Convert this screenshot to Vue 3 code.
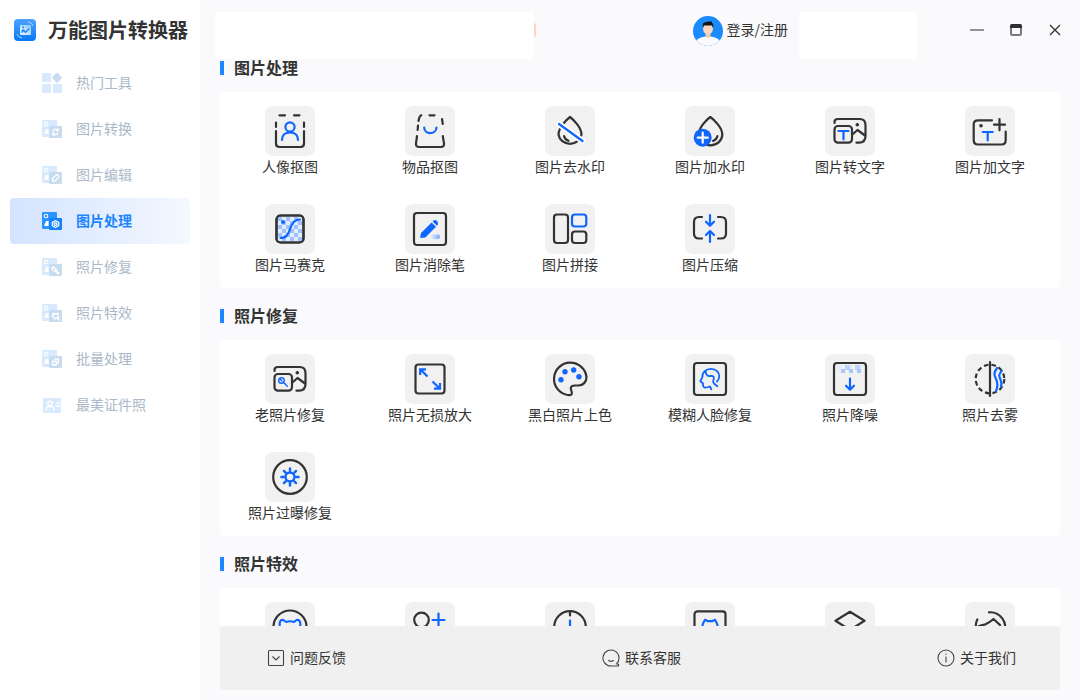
<script setup>
import { ref } from 'vue'

const active = ref('图片处理')

const picture = `<rect x="1" y="2" width="15" height="17" rx="1" fill="var(--base)"/>
<circle cx="5" cy="6" r="1.8" fill="none" stroke="#fff" stroke-width="1.1"/>
<path d="M3 16L5.2 11H7.6V16Z" fill="#fff"/>
<rect x="8" y="8" width="13" height="12" rx="1" fill="var(--badge)"/>`
const glyph = (d) =>
  `${picture}<path d="${d}" fill="none" stroke="#fff" stroke-width="1.3" stroke-linecap="round" stroke-linejoin="round"/>`

const menu = [
  {
    label: '热门工具',
    icon: `<path d="M1 1H10V10H1ZM1 12H10V21H1ZM12 12H21V21H12Z" fill="var(--base)"/><path d="M16 0.5L21.2 5.7L16 10.9L10.8 5.7Z" fill="var(--badge)"/>`
  },
  { label: '图片转换', icon: glyph('M12 13.2A2.8 2.8 0 0 1 17 12.4M17 15A2.8 2.8 0 0 1 12 15.6M17.2 11V12.8H15.6M11.8 17V15.2H13.4') },
  { label: '图片编辑', icon: glyph('M11.5 14.5L14.7 11.4A1.6 1.6 0 0 1 17.4 13.6L14 17H11.5Z') },
  { label: '图片处理', icon: glyph('M14.5 10.7L17.7 12.4V15.8L14.5 17.5L11.3 15.8V12.4ZM13.2 14.1A1.3 1.3 0 1 0 15.8 14.1A1.3 1.3 0 1 0 13.2 14.1') },
  { label: '照片修复', icon: glyph('M15 12.6A2 2 0 1 1 12.8 10.8L13.6 12.4ZM14.6 14L18 17.2M14 14.8L17 17.8') },
  { label: '照片特效', icon: glyph('M12 11.3L14.5 12L17 11.3V14L17.5 15.3L15.2 15.8L13.6 17L13 15.3L11.3 14.6L12.2 13.4ZM16 16L18 18') },
  { label: '批量处理', icon: glyph('M11.5 13.2H15.2V17H11.5ZM13.6 11.2H17.4V15H15.6') },
  {
    label: '最美证件照',
    icon: `<rect x="2" y="4" width="18" height="15" rx="1" fill="var(--base)"/><g fill="none" stroke="#fff" stroke-width="1.5" stroke-linecap="round"><circle cx="9" cy="9.5" r="2.2"/><path d="M5 16C5.5 13 7 12.3 9 12.3S12.5 13 13 16M16 9H18.5M15 12H18.5" /></g>`
  }
]

const BLUE = '#0f66ff'
const blue = (d) => `<path stroke="${BLUE}" d="${d}"/>`
const stackedPhoto = `<path d="M9.5 17V16Q9.5 13 13 13H34.5Q40.5 13 40.5 19V30Q40.5 36.5 34 36.7H31.5M28 28L32.5 24L40 29.5"/>
<rect x="9.5" y="20" width="17.5" height="16.7" rx="3.5"/><circle cx="32.3" cy="18.7" r="1.8" fill="#333" stroke="none"/>`
const frame = '<rect x="9" y="9" width="32" height="32" rx="3"/>'

function checks(x0, y0, cols, rows, size, color) {
  let d = ''
  for (let r = 0; r < rows; r++) {
    for (let c = r % 2; c < cols; c += 2) {
      d += `M${x0 + c * size} ${y0 + r * size}h${size}v${size}h${-size}z`
    }
  }
  return `<path stroke="none" fill="${color}" d="${d}"/>`
}

const rays = Array.from({ length: 8 }, (_, i) =>
  `<path stroke="${BLUE}" stroke-width="2.4" d="M25 18.8V16.4" transform="rotate(${i * 45} 25 25)"/>`
).join('')

const sections = [
  {
    title: '图片处理',
    tools: [
      {
        label: '人像抠图',
        icon: `<path d="M14.5 9.3H20M29 9.3H34.5M11 16.5V21M39 16.5V21M11 25V37.5Q11 41 14.5 41H35.5Q39 41 39 37.5V25"/><circle cx="25" cy="21" r="4.6" stroke="${BLUE}"/>${blue('M17 34C17 29 20 26.5 25 26.5S33 29 33 34')}`
      },
      {
        label: '物品抠图',
        icon: `<path d="M13.5 15C14 12 14.5 9.5 16.3 9.3M24.5 9.3H29.5M37 13L37.8 18M13 19.5L12.6 24M12 30L11 37.5Q10.7 41 14 41H36Q39.3 41 39 37.5L37.8 30"/>${blue('M19.2 21.5C19.5 29 31 29 31.5 21.5')}`
      },
      {
        label: '图片去水印',
        icon: `<path d="M25 11C29 14 36.5 22 36.5 28.5A11.6 10.8 0 0 1 13.5 28.5C13.5 22 21 14 25 11ZM19 30Q20 34 23.5 34.8"/><path d="M14 18L37.5 35" stroke="#fff" stroke-width="6"/>${blue('M14 18L37.5 35')}`
      },
      {
        label: '图片加水印',
        icon: `<path d="M25.3 11C29.5 14 37.3 22 37.3 28.5A11.8 10.8 0 0 1 13.7 28.5C13.7 22 21 14 25.3 11ZM32.5 30Q31.5 34 28 35"/><circle cx="17.7" cy="31.7" r="9" fill="${BLUE}" stroke="none"/><path stroke="#fff" d="M12.7 31.7H22.7M17.7 26.7V36.7"/>`
      },
      { label: '图片转文字', icon: stackedPhoto + blue('M13.5 25H23.5M18.5 25V33.5') },
      {
        label: '图片加文字',
        icon: `<path d="M27 14.3H13Q8.7 14.3 8.7 18.5V34.3Q8.7 38.5 13 38.5H36.5Q40.7 38.5 40.7 34.3V25.5M29 18.7H40M34.5 13V24.3"/><circle cx="16" cy="19.7" r="1.8" fill="#333" stroke="none"/>${blue('M17.7 26H27.7M22.7 26V34.5')}`
      },
      {
        label: '图片马赛克',
        icon: `<rect x="11.5" y="11.5" width="27" height="27" rx="4" fill="#e4edff"/>${checks(13, 13, 6, 6, 4, '#9fc1ff')}<rect x="11.5" y="11.5" width="27" height="27" rx="4"/><circle cx="18" cy="18" r="2" fill="${BLUE}" stroke="none"/>${blue('M15.5 34C28 34 22 16 35 15.5')}`
      },
      {
        label: '图片消除笔',
        icon: `${frame}<defs><linearGradient id="smear"><stop offset="0" stop-color="#e4edff"/><stop offset="1" stop-color="#7aa8ff"/></linearGradient></defs><rect x="26" y="30.5" width="9" height="4.5" rx="2" fill="url(#smear)" stroke="none"/><path fill="${BLUE}" stroke="none" d="M16 29L26.6 18.4L31 22.8L20.4 33.4L15.3 34Q15.2 32 16 29ZM27.6 17.4L28.6 16.4Q30.5 15.3 32 17T32.8 21L32 21.8Z"/>`
      },
      {
        label: '图片拼接',
        icon: `<rect x="9" y="10.5" width="14" height="28.5" rx="3"/><rect x="27" y="10.5" width="14.3" height="12" rx="3" stroke="${BLUE}"/><rect x="27" y="27.5" width="14.3" height="11.5" rx="3"/>`
      },
      {
        label: '图片压缩',
        icon: `<path d="M17 13H14Q9 13 9 18V29.5Q9 34.5 14 34.5H17M33 13H36Q41 13 41 18V29.5Q41 34.5 36 34.5H33"/>${blue('M25 11V21.5M21 17.7L25 21.7L29 17.7M25 38V27.5M21 31L25 27L29 31')}`
      }
    ]
  },
  {
    title: '照片修复',
    tools: [
      {
        label: '老照片修复',
        icon: `${stackedPhoto}<g stroke="${BLUE}" stroke-width="1.4"><circle cx="16.5" cy="26.5" r="2.8"/><path d="M18.6 28.6L22.3 32.3M14.8 24.8L17 27"/></g>`
      },
      {
        label: '照片无损放大',
        icon: `<rect x="10.5" y="10.5" width="29" height="29" rx="3"/><path stroke="${BLUE}" stroke-linecap="butt" stroke-linejoin="miter" d="M15.2 21V15.3H21M15.5 15.5L22.5 22.5M35 29V34.7H29M34.7 34.5L27.5 27.5"/>`
      },
      {
        label: '黑白照片上色',
        icon: `<path d="M26.5 40.3Q25.6 41.5 22.5 41A16.3 16.3 0 1 1 41.5 23C41.5 28 38 31.5 33.5 31.5H30Q25.8 31.5 25.8 34.5C25.8 36.5 27.7 38 26.5 40.3Z"/><g fill="${BLUE}" stroke="none"><circle cx="20" cy="17.7" r="2.7"/><circle cx="28.7" cy="16" r="2.7"/><circle cx="34" cy="22.7" r="2.7"/><circle cx="16" cy="25.7" r="2.7"/></g>`
      },
      {
        label: '模糊人脸修复',
        icon: `${frame}<path stroke="${BLUE}" stroke-width="1.8" d="M26.3 35.3L25 32.5Q22 33.7 19.5 33.5Q17.8 33 18 29.5L15.3 27L17.3 23.5C17 18 21 14.8 26 14.8C31 14.8 34.5 18.5 34.3 22.5C34.2 25 33.5 26 32 27.5M20.8 17.5C20.5 21 23 22.5 25.5 22C28.5 21.5 29.7 23.5 28.5 25.5Q27.5 28 29 29.5L32.3 32.3"/>`
      },
      {
        label: '照片降噪',
        icon: `${checks(12, 11, 6, 1, 5, '#e3ecff')}${checks(20, 11, 3, 1, 5, '#bcd3ff')}${checks(16, 15, 5, 1, 4, '#a9c7ff')}${frame}${blue('M25 24.5V35.5M21 31.7L25 35.7L29 31.7')}`
      },
      {
        label: '照片去雾',
        icon: `<path d="M32 14Q38 17 38 25T32 37Z" fill="#e4edff" stroke="none"/><circle cx="25" cy="25" r="14.3" stroke-dasharray="4.6 3" stroke-linecap="butt"/><path d="M25 8V42"/>${blue('M32 14C28.5 19 29 21 31 25S33 32 31 37.5M36.8 17C33.5 20 33.8 22 35.3 25S37 29 36 33')}`
      },
      {
        label: '照片过曝修复',
        icon: `<circle cx="25" cy="25" r="16.8"/><circle cx="25" cy="25" r="4.5" stroke="${BLUE}" stroke-width="2.4"/>${rays}`
      }
    ]
  },
  {
    title: '照片特效',
    tools: [
      {
        label: '人像动漫化',
        icon: `<circle cx="25" cy="25" r="16.5"/>${blue('M15 26C14 20 15 17.5 18.5 18L21 20Q25 18.5 29 20L31.5 18C35 17.5 36 20 35 26')}`
      },
      {
        label: '性别转换',
        icon: `<circle cx="16.5" cy="18" r="7.3"/><path d="M16.5 26V40"/>${blue('M27.5 18H39.5M33.5 11.5V26')}`
      },
      { label: '年龄变换', icon: `<circle cx="25" cy="25" r="15.8"/><path d="M25 9.5V13.5"/>${blue('M25 18.5V27')}` },
      { label: '人脸融合', icon: `<rect x="9.5" y="9.3" width="31" height="31" rx="3"/>${blue('M17.3 24Q18 20.5 20 17.8L23 19.2H27L30 17.8Q32 20.5 32.7 24')}` },
      { label: '风格转换', icon: '<path d="M25 9.8L39.5 18.8L25 28L10.5 18.8ZM10.5 27L25 36L39.5 27"/>' },
      { label: '天空替换', icon: '<path d="M24 10.3A15 15 0 0 1 39 31M12.3 17.5Q10.5 21 10.8 26M14 24Q18 22.8 20.5 22.3Q24.5 20.5 28.5 17L35 23"/>' }
    ]
  }
]

const footerLinks = [
  { label: '问题反馈', icon: '<rect x="1.5" y="1.5" width="15" height="15" rx="1"/><path d="M5.5 7.5L9 11L12.5 7.5"/>' },
  { label: '联系客服', icon: '<path d="M14.5 14.8A8 8 0 1 0 9 17H16.5V15.5L14.5 14.8Q17 12.5 17 9M6.3 11.2Q9 13.3 11.7 11.2"/>' },
  { label: '关于我们', icon: '<circle cx="9" cy="9" r="8"/><path d="M9 7.5V13.5M9 4.5V5.7"/>' }
]
</script>

<template>
  <div class="app">
    <aside class="sidebar">
      <div class="brand">
        <svg class="logo" viewBox="0 0 22 22" aria-hidden="true">
          <defs>
            <linearGradient id="logoFill" x1="0" y1="0" x2="0" y2="1">
              <stop offset="0" stop-color="#4da3ff" />
              <stop offset="1" stop-color="#0878f5" />
            </linearGradient>
            <linearGradient id="logoPic" x1="1" y1="0" x2="0" y2="1">
              <stop offset="0" stop-color="#8fc8ff" />
              <stop offset="1" stop-color="#e9f5ff" />
            </linearGradient>
          </defs>
          <rect width="22" height="22" rx="4" fill="url(#logoFill)" />
          <rect x="6" y="6" width="11" height="10" rx="1" fill="url(#logoPic)" />
          <path d="M7.5 14.5V11.5L9.5 10L11.5 12.2L15.5 8.5V10.5L11.5 14.2L9.5 12.4Z" fill="#2186f8" />
          <circle cx="9" cy="8.3" r="1" fill="#2186f8" />
          <path d="M14 3Q18 3 19 7M3 15Q4 18.5 8 19" fill="none" stroke="#a5d3ff" stroke-width="1" />
        </svg>
        <h1>万能图片转换器</h1>
      </div>
      <nav>
        <a
          v-for="item in menu"
          :key="item.label"
          href="#"
          class="nav-item"
          :class="{ active: item.label === active }"
          @click.prevent="active = item.label"
        >
          <svg viewBox="0 0 22 22" aria-hidden="true" v-html="item.icon"></svg>
          <span>{{ item.label }}</span>
        </a>
      </nav>
    </aside>

    <main class="main">
      <header class="topbar">
        <div class="banner"></div>
        <button class="account" type="button">
          <svg viewBox="0 0 30 30" aria-hidden="true">
            <defs>
              <clipPath id="avatar"><circle cx="15" cy="15" r="15" /></clipPath>
            </defs>
            <g clip-path="url(#avatar)">
              <rect width="30" height="30" fill="#1a8aff" />
              <path d="M3 30V25Q5 21.5 12 20.5H18Q25 21.5 27 25V30Z" fill="#fafafc" />
              <path d="M12.5 16H17.5V20.5Q15 23 12.5 20.5Z" fill="#f6c4ad" />
              <ellipse cx="15" cy="12.5" rx="5" ry="6" fill="#fcd5c1" />
              <path d="M10 12Q9 7 11.5 6.5Q15 5 19 5.5L18.7 6.5Q21 8 20 12L19 9.5H11Z" fill="#151515" />
            </g>
          </svg>
          <span>登录/注册</span>
        </button>
        <div class="notice"></div>
        <div class="window-controls">
          <button type="button" aria-label="最小化">
            <svg viewBox="0 0 14 14"><path d="M0 7H14" stroke="#929294" stroke-width="2" /></svg>
          </button>
          <button type="button" aria-label="最大化">
            <svg viewBox="0 0 14 14">
              <rect x="2" y="2" width="10" height="10" rx="1.5" fill="none" stroke="#77787a" stroke-width="2" />
              <path d="M1 5V3Q1 1 3 1H11Q13 1 13 3V5Z" fill="#2f3033" />
            </svg>
          </button>
          <button type="button" aria-label="关闭">
            <svg viewBox="0 0 14 14"><path d="M2 2L12 12M12 2L2 12" stroke="#333" stroke-width="1.3" /></svg>
          </button>
        </div>
      </header>

      <div class="content">
        <section v-for="section in sections" :key="section.title">
          <h2>{{ section.title }}</h2>
          <div class="panel">
            <button v-for="tool in section.tools" :key="tool.label" class="tool" type="button">
              <svg
                class="tile"
                viewBox="0 0 50 50"
                fill="none"
                stroke="#333"
                stroke-width="2.2"
                stroke-linecap="round"
                stroke-linejoin="round"
                aria-hidden="true"
                v-html="tool.icon"
              ></svg>
              <span>{{ tool.label }}</span>
            </button>
          </div>
        </section>
      </div>

      <footer class="footer">
        <a v-for="link in footerLinks" :key="link.label" href="#">
          <svg viewBox="0 0 18 18" fill="none" stroke="#444" stroke-width="1.1" aria-hidden="true" v-html="link.icon"></svg>
          <span>{{ link.label }}</span>
        </a>
      </footer>
    </main>
  </div>
</template>

<style>
body {
  margin: 0;
}
</style>

<style scoped>
.app {
  display: flex;
  height: 100vh;
  background: #fafafc;
  color: #333;
  font-family: "Noto Sans CJK SC", sans-serif;
  font-size: 14px;
  line-height: 20px;
}
button {
  padding: 0;
  border: 0;
  background: none;
  color: inherit;
  font: inherit;
  cursor: pointer;
}
a {
  color: inherit;
  text-decoration: none;
}
svg {
  display: block;
  flex: none;
}
.sidebar {
  flex: none;
  width: 200px;
  box-sizing: border-box;
  padding: 0 10px;
  background: #fff;
}
.brand {
  display: flex;
  align-items: center;
  gap: 12px;
  height: 60px;
  padding-left: 4px;
}
.logo {
  width: 22px;
  height: 22px;
}
h1 {
  margin: 0;
  font-size: 20px;
  line-height: 28px;
  font-weight: 700;
  white-space: nowrap;
}
.nav-item {
  --base: #d9eaff;
  --badge: #c8dcf0;
  display: flex;
  align-items: center;
  gap: 13px;
  height: 46px;
  padding-left: 31px;
  border-radius: 4px;
  color: #a9b9c9;
}
.nav-item svg {
  width: 22px;
  height: 22px;
}
.nav-item span,
.footer span {
  padding-bottom: 2px;
}
.nav-item.active {
  --base: #2a93ff;
  --badge: #1482fa;
  background: linear-gradient(90deg, #d3e4ff, #f4f8ff);
  color: #1b86ff;
  font-weight: 700;
}
.main {
  flex: 1;
  min-width: 0;
  display: flex;
  flex-direction: column;
}
.topbar {
  flex: none;
  display: flex;
  align-items: center;
  height: 59px;
  padding: 0 18px 0 15px;
}
.banner,
.notice {
  height: 47px;
  margin-top: 12px;
  border-radius: 2px;
  background: #fff;
}
.banner {
  position: relative;
  width: 319px;
}
.banner::after {
  content: "";
  position: absolute;
  top: 11px;
  left: 100%;
  width: 2px;
  height: 14px;
  border-radius: 0 2px 2px 0;
  background: #ffd3bf;
}
.notice {
  width: 118px;
  margin-left: 11px;
}
.account {
  display: flex;
  align-items: center;
  gap: 4px;
  margin-top: 2px;
  margin-left: auto;
}
.account svg {
  width: 30px;
  height: 30px;
}
.account span {
  padding-bottom: 4px;
}
.window-controls {
  display: flex;
  gap: 25px;
  margin-top: 1px;
  margin-left: 53px;
}
.window-controls svg {
  width: 14px;
  height: 14px;
}
.content {
  flex: 1;
  min-height: 0;
  padding: 0 20px;
  overflow-y: auto;
  scrollbar-width: none;
}
h2 {
  display: flex;
  align-items: center;
  gap: 10px;
  margin: 19px 0 17px;
  font-size: 16px;
  line-height: 16px;
  font-weight: 700;
}
section:first-child h2 {
  margin-top: 0;
}
h2::before {
  content: "";
  width: 4px;
  height: 14px;
  margin-top: 2px;
  background: #1a86ff;
}
.panel {
  display: grid;
  grid-template-columns: repeat(6, 1fr);
  border-radius: 4px;
  background: #fff;
}
.tool {
  display: flex;
  flex-direction: column;
  align-items: center;
  padding: 14px 0;
  line-height: 20px;
}
.tile {
  width: 50px;
  height: 50px;
  border-radius: 8px;
  background: #f1f1f1;
}
.footer {
  flex: none;
  display: flex;
  align-items: center;
  justify-content: space-between;
  height: 64px;
  margin: 0 20px 10px;
  padding: 0 44px 0 47px;
  box-sizing: border-box;
  border-radius: 4px;
  background: #f0f0f0;
}
.footer a {
  display: flex;
  align-items: center;
  gap: 5px;
}
.footer svg {
  width: 18px;
  height: 18px;
}
</style>
